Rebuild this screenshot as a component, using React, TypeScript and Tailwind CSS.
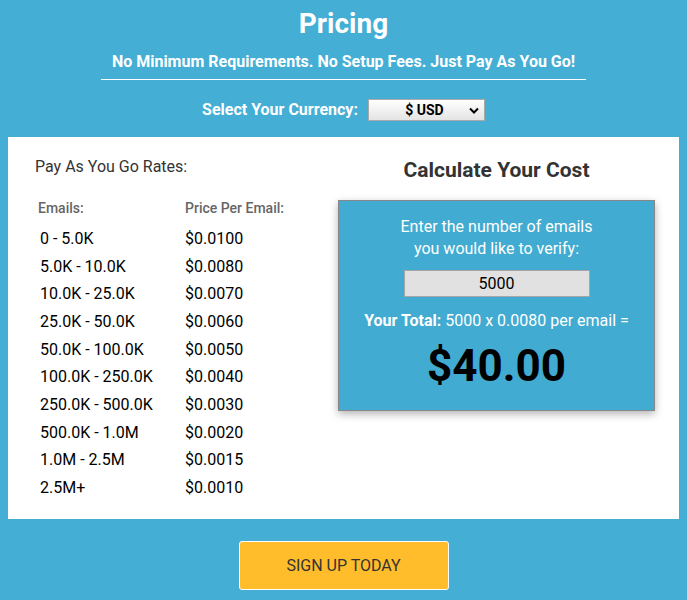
import { useState } from 'react';

const rates = [
  { range: '0 - 5.0K', price: '$0.0100' },
  { range: '5.0K - 10.0K', price: '$0.0080' },
  { range: '10.0K - 25.0K', price: '$0.0070' },
  { range: '25.0K - 50.0K', price: '$0.0060' },
  { range: '50.0K - 100.0K', price: '$0.0050' },
  { range: '100.0K - 250.0K', price: '$0.0040' },
  { range: '250.0K - 500.0K', price: '$0.0030' },
  { range: '500.0K - 1.0M', price: '$0.0020' },
  { range: '1.0M - 2.5M', price: '$0.0015' },
  { range: '2.5M+', price: '$0.0010' },
];

export default function App() {
  const [count, setCount] = useState('5000');

  return (
    <div className="min-h-[600px] bg-[#44aed4] pt-[7px] pb-[10px] font-['Roboto',sans-serif]">
      {/* Header */}
      <h1 className="text-center text-[28px] leading-[34px] font-bold text-white">Pricing</h1>
      <p className="mt-[10px] text-center text-[16px] leading-[22px] font-bold text-white">
        No Minimum Requirements. No Setup Fees. Just Pay As You Go!
      </p>
      <div className="mx-auto mt-[6px] h-px w-[485px] bg-white" />

      {/* Currency */}
      <div className="mt-[19px] flex items-center justify-center gap-[10px]">
        <span className="text-[16px] leading-[22px] font-bold text-white">Select Your Currency:</span>
        <div className="relative flex h-[22px] w-[117px] items-center justify-center border border-[#a9a9a9] bg-gradient-to-b from-white to-[#e4e4e4]">
          <span className="pr-[4px] text-[14px] font-bold text-black">$ USD</span>
          <svg className="absolute right-[5px] top-[7px]" width="10" height="7" viewBox="0 0 10 7">
            <path d="M1 1.5 L5 5.5 L9 1.5" fill="none" stroke="#000" strokeWidth="2" />
          </svg>
        </div>
      </div>

      {/* Panel */}
      <div className="mx-[8px] mt-[16px] flex bg-white">
        {/* Rates */}
        <div className="w-[306px] pl-[27px] pt-[18px] pb-[17px]">
          <p className="text-[16px] leading-[24px] text-[#333]">Pay As You Go Rates:</p>
          <div className="mt-[19px] flex h-[20px] items-center pl-[3px] text-[14px] font-medium text-[#666]">
            <span className="w-[147px]">Emails:</span>
            <span>Price Per Email:</span>
          </div>
          <div className="mt-[7px]">
            {rates.map((r) => (
              <div key={r.range} className="flex h-[27.7px] items-center text-[16px] text-black">
                <span className="w-[150px] pl-[5px]">{r.range}</span>
                <span>{r.price}</span>
              </div>
            ))}
          </div>
        </div>

        {/* Calculator */}
        <div className="flex flex-1 flex-col items-center pt-[19px]">
          <h2 className="text-[21px] leading-[28px] font-bold text-[#333]">Calculate Your Cost</h2>
          <div className="mt-[16px] flex w-[317px] flex-col items-center border border-[#888] bg-[#42abd1] pt-[15px] pb-[18px] shadow-[0_3px_8px_rgba(0,0,0,0.3)]">
            <p className="text-center text-[16px] leading-[22px] text-white">
              Enter the number of emails
              <br />
              you would like to verify:
            </p>
            <input
              value={count}
              onChange={(e) => setCount(e.target.value)}
              className="mt-[10px] h-[27px] w-[186px] border border-[#a5a5a5] bg-[#e1e1e1] text-center text-[16px] text-black outline-none"
            />
            <p className="mt-[13px] text-[16px] leading-[22px] text-white">
              <span className="font-bold">Your Total:</span> 5000 x 0.0080 per email =
            </p>
            <p className="mt-[8px] text-[44px] leading-[52px] font-bold text-black">$40.00</p>
          </div>
        </div>
      </div>

      {/* CTA */}
      <div className="mt-[22px] flex justify-center">
        <button className="h-[49px] w-[210px] rounded-[3px] border border-white bg-[#ffbd2b] pt-[2px] text-[16px] text-[#333]">
          SIGN UP TODAY
        </button>
      </div>
    </div>
  );
}
